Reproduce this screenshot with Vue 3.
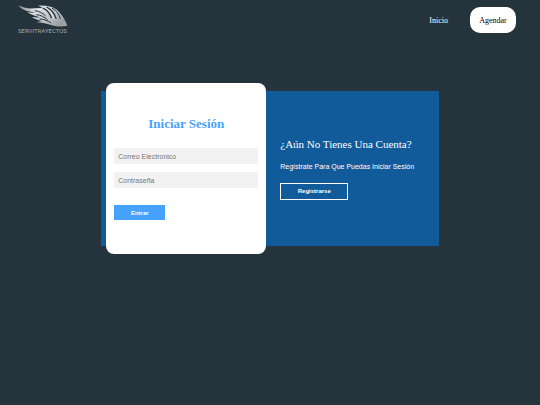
<script setup>
import { ref } from "vue";

const correo = ref("");
const clave = ref("");
</script>

<template>
  <div class="page">
    <header class="nav">
      <a href="#" class="logo">
        <svg class="wing" viewBox="24 14 150 66" aria-hidden="true">
          <defs>
            <linearGradient id="silver" x1="0" y1="0" x2="1" y2="0.6">
              <stop offset="0" stop-color="#858c90" />
              <stop offset="0.4" stop-color="#d9dcdd" />
              <stop offset="0.7" stop-color="#c2c6c8" />
              <stop offset="1" stop-color="#9ba0a3" />
            </linearGradient>
          </defs>
          <path
            fill="url(#silver)"
            d="M26 15C42 23 58 26 74 24L98 23C94 20 90 18 84 16C104 14 124 17 138 27C151 37 164 54 172 76C156 80 136 79 120 73C106 69 94 66 80 66C88 64 93 63 98 63C86 60 74 56 66 50C74 51 82 52 90 51C76 47 60 42 52 35C60 37 68 38 76 37C60 34 32 30 26 15Z"
          />
          <g fill="none" stroke="#25333c" stroke-linecap="round">
            <path stroke-width="3" d="M76 31C88 33 98 38 106 46" />
            <path stroke-width="3" d="M80 43C92 44 104 50 112 58" />
            <path stroke-width="3" d="M90 56C102 56 114 62 122 67" />
            <path stroke-width="4" d="M100 24C112 29 119 38 124 52" />
            <path stroke-width="4" d="M111 21C126 28 133 38 138 54" />
            <path stroke-width="3" d="M127 24C140 31 147 41 151 55" />
          </g>
          <path fill="none" stroke="#f4f5f5" stroke-width="2" d="M62 27L92 26M106 22C118 29 127 39 131 55" />
        </svg>
        <span class="brand">SERVITRAYECTOS</span>
      </a>
      <nav class="links">
        <a href="#" class="link">Inicio</a>
        <button type="button" class="agendar">Agendar</button>
      </nav>
    </header>

    <main class="panel">
      <form class="card" @submit.prevent>
        <h2>Iniciar Sesión</h2>
        <input v-model="correo" type="email" placeholder="Correo Electronico" aria-label="Correo Electronico" />
        <input v-model="clave" type="password" placeholder="Contraseña" aria-label="Contraseña" />
        <button type="submit" class="entrar">Entrar</button>
      </form>
      <section class="registro">
        <h3>¿Aún No Tienes Una Cuenta?</h3>
        <p>Regístrate Para Que Puedas Iniciar Sesión</p>
        <button type="button" class="registrarse">Registrarse</button>
      </section>
    </main>
  </div>
</template>

<style>
body {
  background: #25333c;
}
</style>

<style scoped>
* {
  box-sizing: border-box;
}

.page {
  min-height: 100vh;
  background: #25333c;
  font-family: "Liberation Sans", Arial, sans-serif;
}

.nav {
  display: flex;
  justify-content: space-between;
  align-items: center;
  height: 40px;
  padding: 0 24px 0 18px;
}

.logo {
  display: flex;
  flex-direction: column;
  text-decoration: none;
}

.wing {
  width: 50px;
  height: 22px;
}

.brand {
  color: #a3a9ac;
  font-family: Roboto, "Liberation Sans", sans-serif;
  font-size: 6px;
  line-height: 8px;
}

.links {
  display: flex;
  align-items: center;
  gap: 22px;
  font-family: "Liberation Serif", "Times New Roman", serif;
  font-size: 8px;
}

.link {
  color: #fff;
  text-decoration: none;
}

.agendar {
  width: 46px;
  height: 26px;
  padding: 0;
  border: none;
  border-radius: 10px;
  background: #fff;
  color: #000;
  font: inherit;
  cursor: pointer;
}

.panel {
  display: grid;
  grid-template-columns: 160px 1fr;
  gap: 14px;
  width: 62.5%;
  margin: 51px auto 0;
  padding: 0 5px;
  background: #125b9b;
}

.card {
  display: flex;
  flex-direction: column;
  align-items: flex-start;
  gap: 8px;
  margin: -8px 0;
  padding: 34px 8px;
  border-radius: 8px;
  background: #fff;
}

.card h2 {
  align-self: center;
  margin: 0 0 9px;
  color: #46a2fd;
  font-family: "Liberation Serif", "Times New Roman", serif;
  font-size: 13px;
  line-height: 14px;
}

.card input {
  width: 100%;
  height: 16px;
  padding: 0 4px;
  border: none;
  border-radius: 0;
  outline: none;
  background: #f2f2f2;
  color: #333;
  font-family: inherit;
  font-size: 7px;
}

.card input::placeholder {
  color: #757575;
}

.entrar {
  width: 51px;
  height: 15px;
  margin-top: 9px;
  padding: 0;
  border: none;
  background: #46a2fd;
  color: #fff;
  font-family: inherit;
  font-size: 6px;
  font-weight: bold;
  cursor: pointer;
}

.registro {
  display: flex;
  flex-direction: column;
  align-items: flex-start;
  justify-content: center;
  height: 155px;
  color: #fff;
}

.registro h3 {
  margin: 0;
  font-family: "Liberation Serif", "Times New Roman", serif;
  font-size: 11px;
  font-weight: normal;
  line-height: 13px;
  white-space: nowrap;
}

.registro p {
  margin: 12px 0;
  font-size: 7px;
  line-height: 8px;
  white-space: nowrap;
}

.registrarse {
  width: 68px;
  height: 17px;
  padding: 0;
  border: 1px solid #fff;
  background: transparent;
  color: #fff;
  font-family: inherit;
  font-size: 6px;
  font-weight: bold;
  cursor: pointer;
}
</style>
